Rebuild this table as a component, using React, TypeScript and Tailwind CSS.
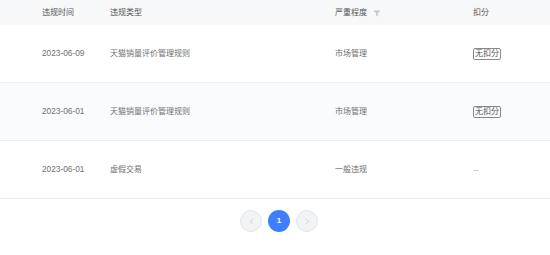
import { ChevronLeft, ChevronRight } from "lucide-react";

const rows = [
  { date: "2023-06-09", type: "天猫销量评价管理规则", level: "市场管理", score: "tag" },
  { date: "2023-06-01", type: "天猫销量评价管理规则", level: "市场管理", score: "tag" },
  { date: "2023-06-01", type: "虚假交易", level: "一般违规", score: "--" },
];

function FilterIcon() {
  return (
    <svg width="8" height="7" viewBox="0 0 8 7" className="ml-[6px] mt-[1px]">
      <path d="M0.5 0.5h7L4.8 3.6V6.5L3.2 5.8V3.6z" fill="#c4c7cc" />
    </svg>
  );
}

export default function App() {
  return (
    <div
      className="w-[550px] h-[255px] bg-white text-[8px] text-[#707070]"
      style={{ fontFamily: '"Liberation Sans", "Noto Sans CJK SC", sans-serif' }}
    >
      {/* Header */}
      <div className="flex h-[25px] items-center bg-[#f7f8fa] pl-[42px] text-[#555]">
        <div className="w-[68px]">违规时间</div>
        <div className="w-[225px]">违规类型</div>
        <div className="flex w-[138px] items-center">
          严重程度
          <FilterIcon />
        </div>
        <div className="flex-1">扣分</div>
      </div>

      {/* Rows */}
      {rows.map((row, i) => (
        <div
          key={i}
          className={`flex h-[58px] items-center border-b border-[#ebedf0] pl-[42px] ${
            i === 1 ? "bg-[#fafbfc]" : "bg-white"
          }`}
        >
          <div className="w-[68px] text-[8.3px]">{row.date}</div>
          <div className="w-[225px]">{row.type}</div>
          <div className="w-[138px]">{row.level}</div>
          <div className="flex-1">
            {row.score === "tag" ? (
              <span className="inline-flex h-[12px] items-center rounded-[2px] border border-[#8a8a8a] px-[1px] leading-none text-[#555]">
                无扣分
              </span>
            ) : (
              <span className="text-[#999]">{row.score}</span>
            )}
          </div>
        </div>
      ))}

      {/* Pagination */}
      <div className="flex justify-center gap-[6px] pl-[8px] pt-[11px]">
        <button className="flex h-[22px] w-[22px] items-center justify-center rounded-full border border-[#e5e6eb] bg-[#f2f3f5] text-[#b5b8be]">
          <ChevronLeft size={9} strokeWidth={1.5} />
        </button>
        <button className="flex h-[22px] w-[22px] items-center justify-center rounded-full bg-[#3d7fff] text-[8px] font-semibold text-white">
          1
        </button>
        <button className="flex h-[22px] w-[22px] items-center justify-center rounded-full border border-[#e5e6eb] bg-[#f2f3f5] text-[#b5b8be]">
          <ChevronRight size={9} strokeWidth={1.5} />
        </button>
      </div>
    </div>
  );
}
